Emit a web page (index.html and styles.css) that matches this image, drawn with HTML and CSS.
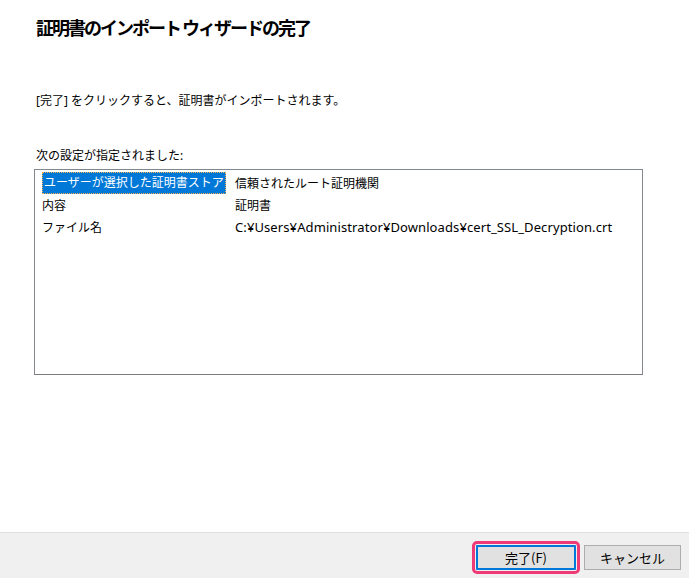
FILE: index.html
```html
<!DOCTYPE html>
<html lang="ja">
  <head>
    <meta charset="UTF-8" />
    <meta name="viewport" content="width=device-width, initial-scale=1.0" />
    <title>証明書のインポート ウィザード</title>
    <link rel="stylesheet" href="styles.css">
  </head>
  <body>
    <div class="wizard">
      <div class="wizard-body">
        <h1 class="wizard-title">証明書のインポート ウィザードの完了</h1>

        <p class="wizard-text">[完了] をクリックすると、証明書がインポートされます。</p>

        <p class="list-label">次の設定が指定されました:</p>

        <div class="settings-list">
          <div class="settings-row">
            <div class="cell"><span class="selected">ユーザーが選択した証明書ストア</span></div>
            <div class="cell">信頼されたルート証明機関</div>
          </div>
          <div class="settings-row">
            <div class="cell">内容</div>
            <div class="cell">証明書</div>
          </div>
          <div class="settings-row">
            <div class="cell">ファイル名</div>
            <div class="cell path">C:¥Users¥Administrator¥Downloads¥cert_SSL_Decryption.crt</div>
          </div>
        </div>
      </div>

      <div class="wizard-footer">
        <button type="button" class="btn btn-default">完了(F)</button>
        <button type="button" class="btn">キャンセル</button>
      </div>
    </div>
  </body>
</html>
```

FILE: styles.css
```css
body {
  font-family: "Noto Sans", "Noto Sans CJK JP", sans-serif;
  margin: 0;
  padding: 0;
  background-color: #fff;
  color: #000;
}

.wizard {
  height: 578px;
  display: flex;
  flex-direction: column;
}

.wizard-body {
  flex: 1;
  padding: 15px 46px 0 34px;
}

.wizard-title {
  margin: 0 0 0 2px;
  font-family: "Noto Sans CJK JP", sans-serif;
  font-size: 18px;
  font-weight: 600;
  line-height: 24px;
  letter-spacing: -2px;
  color: #000;
}

.wizard-text {
  margin: 54px 0 0 2px;
  font-size: 12px;
  line-height: 16px;
}

.list-label {
  margin: 39px 0 5px 2px;
  font-size: 12px;
  line-height: 16px;
}

.settings-list {
  height: 202px;
  border: 1px solid #828790;
  border-bottom-color: #7a7a7a;
  padding: 2px 0 0 7px;
  box-sizing: content-box;
}

.settings-row {
  display: grid;
  grid-template-columns: 193px 1fr;
  height: 22px;
  align-items: center;
  font-size: 12px;
}

.cell {
  white-space: nowrap;
}

.path {
  font-size: 13px;
  letter-spacing: 0.1px;
}

.selected {
  display: inline-block;
  background-color: #0078d7;
  color: #fff;
  padding: 2px 1px;
  line-height: 16px;
  border: 1px dotted #f4b24a;
}

.wizard-footer {
  border-top: 1px solid #dfdfdf;
  background-color: #f0f0f0;
  height: 46px;
  display: flex;
  justify-content: flex-end;
  align-items: flex-start;
  gap: 8px;
  padding: 12px 8px 0 0;
  box-sizing: border-box;
}

.btn {
  width: 97px;
  height: 25px;
  background-color: #e1e1e1;
  border: 1px solid #adadad;
  font-family: "Noto Sans CJK JP", sans-serif;
  font-size: 13px;
  color: #000;
  padding: 0;
}

.btn-default {
  width: 100px;
  border: 2px solid #0078d7;
  outline: 3px solid #ee3b78;
  outline-offset: 1px;
  border-radius: 1px;
}
```
